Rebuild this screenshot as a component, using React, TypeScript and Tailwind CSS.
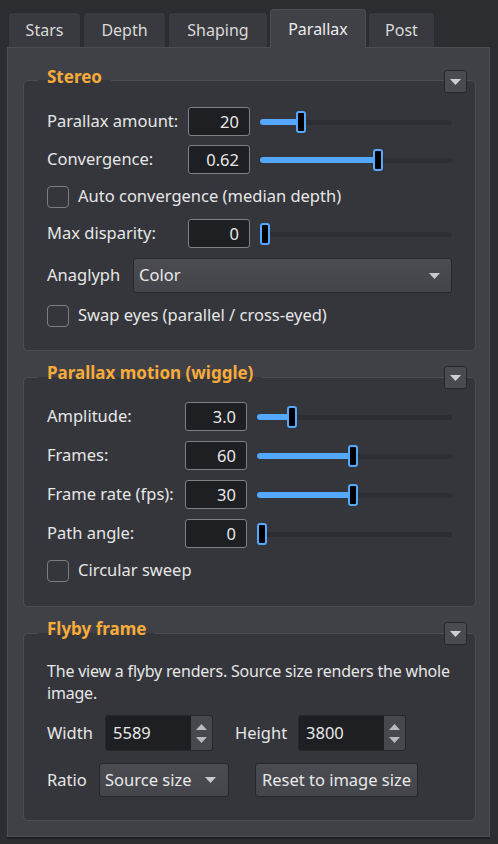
import React from 'react';

const PANE = '#404146';
const GROUP = '#35363b';

function CollapseButton() {
  return (
    <div className="absolute right-[9px] top-0 w-[23px] h-[23px] rounded-[3px] border border-[#25262a] bg-[#4a4b50] flex items-center justify-center">
      <svg width="11" height="6" viewBox="0 0 11 6">
        <path d="M0 0 H11 L5.5 6 Z" fill="#cfd0d2" />
      </svg>
    </div>
  );
}

function Group({ title, children, frameTop = 10, className = '' }: { title: string; children: React.ReactNode; frameTop?: number; className?: string }) {
  return (
    <div className={`relative ml-[15px] w-[453px] ${frameTop === 11 ? 'pt-[11px]' : 'pt-[10px]'} ${className}`}>
      <div className="rounded-[5px] border border-[#4c4d53] bg-[#35363b] px-[23px]">
        {children}
      </div>
      <div
        className="absolute left-[15px] top-[-4px] px-[9px] h-[22px] leading-[22px] text-[17px] font-bold text-[#f7ab3a]"
        style={{ background: `linear-gradient(to bottom, ${PANE} 0, ${PANE} ${frameTop + 4}px, ${GROUP} ${frameTop + 4}px)` }}
      >
        {title}
      </div>
      <CollapseButton />
    </div>
  );
}

function NumInput({ value, w = 62 }: { value: string; w?: number }) {
  return (
    <div
      className="h-[29px] rounded-[3px] border border-[#7f8085] bg-[#1e1f23] text-right pr-[10px] leading-[27px] text-[16.5px] text-[#e8e8e8]"
      style={{ width: w }}
    >
      {value}
    </div>
  );
}

function Slider({ frac }: { frac: number }) {
  return (
    <div className="relative flex-1 h-[22px]">
      <div className="absolute left-0 right-0 top-[9px] h-[5px] rounded-full bg-[#2d2e32]" />
      <div
        className="absolute left-0 top-[8px] h-[6px] rounded-l-full bg-[#55a8ff]"
        style={{ width: `calc(${frac} * (100% - 10px) + 2px)` }}
      />
      <div
        className="absolute top-0 w-[10px] h-[22px] rounded-[3px] border-2 border-[#55a8ff] bg-black"
        style={{ left: `calc(${frac} * (100% - 10px))` }}
      />
    </div>
  );
}

function SliderRow({ label, value, frac, labelW, className = '' }: { label: string; value: string; frac: number; labelW: number; className?: string }) {
  return (
    <div className={`flex items-center h-[29px] ${className}`}>
      <div className="shrink-0 text-[16.5px] text-[#e6e6e6]" style={{ width: labelW }}>
        {label}
      </div>
      <NumInput value={value} />
      <div className="w-[10px] shrink-0" />
      <Slider frac={frac} />
    </div>
  );
}

function Check({ label, className = '' }: { label: string; className?: string }) {
  return (
    <div className={`flex items-center h-[29px] ${className}`}>
      <div className="w-[22px] h-[22px] rounded-[4px] border-[1.5px] border-[#7c7d82]" />
      <span className="ml-[9px] text-[16.5px] text-[#e6e6e6]">{label}</span>
    </div>
  );
}

function ComboArrow() {
  return (
    <svg width="11" height="6" viewBox="0 0 11 6">
      <path d="M0 0 H11 L5.5 6 Z" fill="#c8c9cb" />
    </svg>
  );
}

function SpinBox({ value }: { value: string }) {
  return (
    <div className="flex h-[36px] w-[108px] rounded-[3px] border border-[#26272b] bg-[#1e1f23] overflow-hidden">
      <div className="flex-1 pl-[7px] leading-[34px] text-[16.5px] text-[#e8e8e8]">{value}</div>
      <div className="w-[21px] bg-[#47484d] flex flex-col items-center justify-center gap-[7px]">
        <svg width="11" height="6" viewBox="0 0 11 6">
          <path d="M0 6 H11 L5.5 0 Z" fill="#b9babd" />
        </svg>
        <svg width="11" height="6" viewBox="0 0 11 6">
          <path d="M0 0 H11 L5.5 6 Z" fill="#b9babd" />
        </svg>
      </div>
    </div>
  );
}

const tabs = [
  { name: 'Stars', w: 73 },
  { name: 'Depth', w: 83 },
  { name: 'Shaping', w: 100 },
  { name: 'Parallax', w: 96, active: true },
  { name: 'Post', w: 67 },
];

export default function App() {
  return (
    <div className="w-[498px] h-[844px] overflow-hidden bg-[#2c2d31] font-['Noto_Sans','Open_Sans',sans-serif] text-[#e6e6e6]">
      {/* Tab bar */}
      <div className="relative z-10 flex items-end gap-[2px] pl-[8px] pt-[9px] h-[47px]">
        {tabs.map((t) =>
          t.active ? (
            <div
              key={t.name}
              className="h-[39px] mb-[-1px] rounded-t-[4px] border border-b-0 border-[#4c4d53] bg-[#404146] flex items-center justify-center text-[16px] text-[#ececec]"
              style={{ width: t.w }}
            >
              {t.name}
            </div>
          ) : (
            <div
              key={t.name}
              className="h-[35px] rounded-t-[4px] border border-b-0 border-[#2a2b2f] bg-[#393a3f] flex items-center justify-center text-[16px] text-[#d9d9d9]"
              style={{ width: t.w }}
            >
              {t.name}
            </div>
          )
        )}
      </div>

      {/* Pane */}
      <div className="ml-[7px] w-[483px] h-[790px] border border-[#4c4d53] bg-[#404146] pt-[22px] shadow-[0_2px_0_#1f2023]">
        <Group title="Stereo">
          <div className="pt-[26px] pb-[20px]">
            <SliderRow label="Parallax amount:" value="20" frac={0.2} labelW={141} />
            <SliderRow label="Convergence:" value="0.62" frac={0.62} labelW={141} className="mt-[9px]" />
            <Check label="Auto convergence (median depth)" className="mt-[8px]" />
            <SliderRow label="Max disparity:" value="0" frac={0} labelW={141} className="mt-[8px]" />
            <div className="flex items-center mt-[10px] h-[35px]">
              <div className="w-[86px] shrink-0 text-[16.5px]">Anaglyph</div>
              <div className="flex-1 h-[35px] rounded-[3px] border border-[#26272b] bg-[linear-gradient(to_bottom,#4b4c51,#44454a)] flex items-center justify-between pl-[5px] pr-[11px]">
                <span className="text-[16.5px] text-[#e8e8e8]">Color</span>
                <ComboArrow />
              </div>
            </div>
            <Check label="Swap eyes (parallel / cross-eyed)" className="mt-[8px]" />
          </div>
        </Group>

        <Group title="Parallax motion (wiggle)" frameTop={11} className="mt-[15px]">
          <div className="pt-[24px] pb-[21px]">
            <SliderRow label="Amplitude:" value="3.0" frac={0.163} labelW={138} />
            <SliderRow label="Frames:" value="60" frac={0.49} labelW={138} className="mt-[10px]" />
            <SliderRow label="Frame rate (fps):" value="30" frac={0.49} labelW={138} className="mt-[10px]" />
            <SliderRow label="Path angle:" value="0" frac={0} labelW={138} className="mt-[10px]" />
            <Check label="Circular sweep" className="mt-[8px]" />
          </div>
        </Group>

        <Group title="Flyby frame" frameTop={11} className="mt-[15px]">
          <div className="pt-[26px] pb-[23px]">
            <p className="text-[16px] tracking-[-0.2px] leading-[22px] text-[#e6e6e6]">
              The view a flyby renders. Source size renders the whole image.
            </p>
            <div className="flex items-center mt-[11px]">
              <span className="w-[58px] text-[16.5px]">Width</span>
              <SpinBox value="5589" />
              <span className="ml-[22px] w-[63px] text-[16.5px]">Height</span>
              <SpinBox value="3800" />
            </div>
            <div className="flex items-center mt-[12px]">
              <span className="w-[52px] text-[16.5px]">Ratio</span>
              <div className="w-[130px] h-[34px] rounded-[3px] border border-[#26272b] bg-[linear-gradient(to_bottom,#4b4c51,#44454a)] flex items-center justify-between pl-[5px] pr-[12px]">
                <span className="text-[16.5px] text-[#e8e8e8]">Source size</span>
                <ComboArrow />
              </div>
              <div className="ml-[26px] w-[163px] h-[34px] rounded-[3px] border border-[#26272b] bg-[linear-gradient(to_bottom,#4b4c51,#44454a)] flex items-center justify-center text-[16.5px] text-[#e8e8e8]">
                Reset to image size
              </div>
            </div>
          </div>
        </Group>
      </div>
    </div>
  );
}
